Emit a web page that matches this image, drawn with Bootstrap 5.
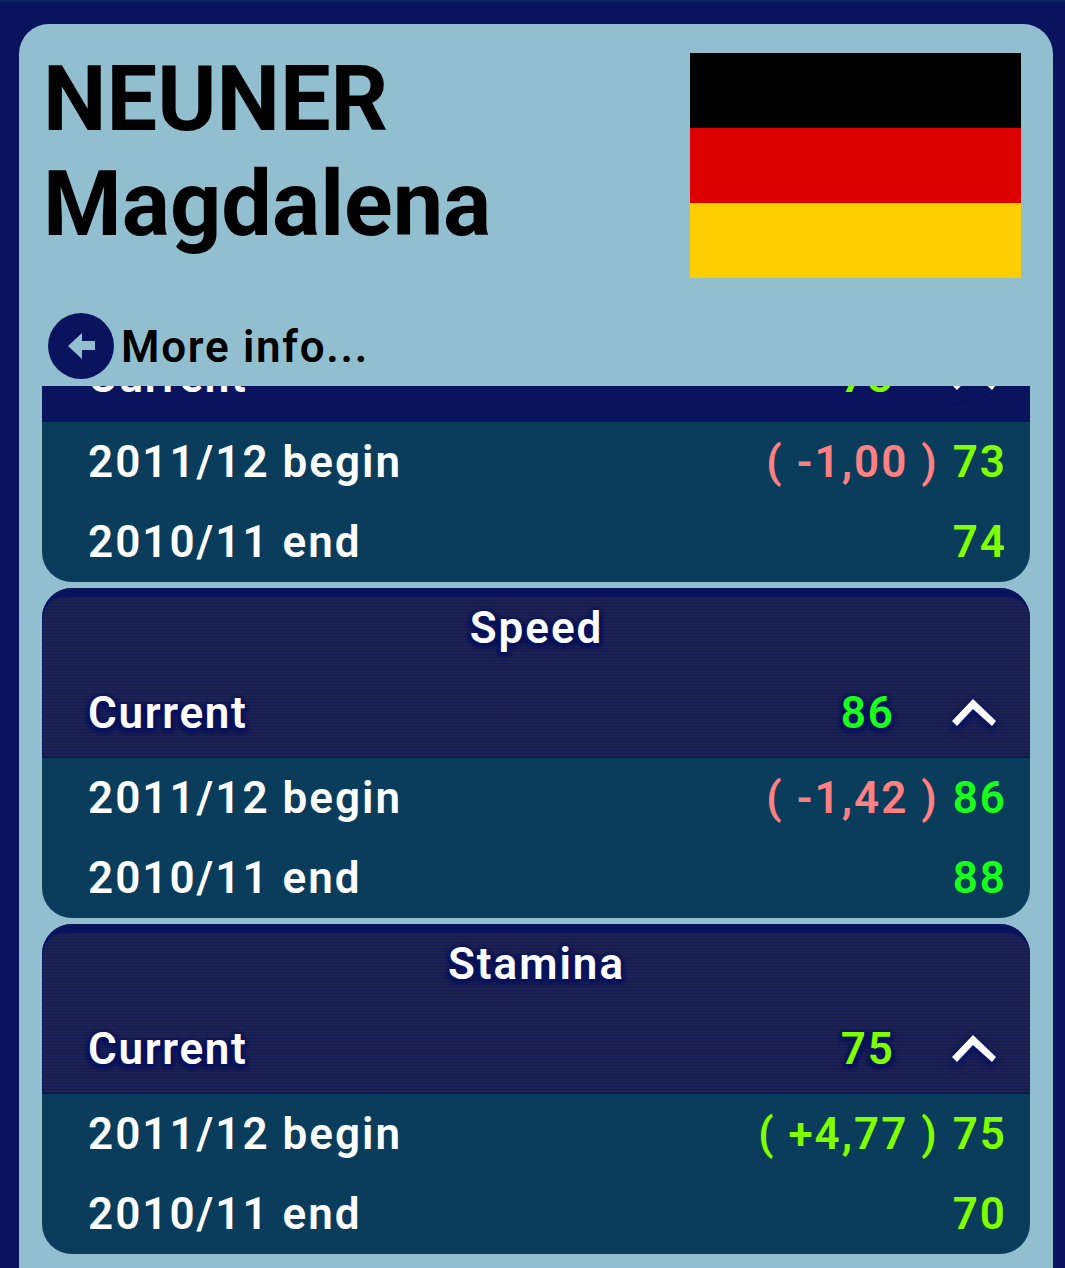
<!DOCTYPE html>
<html lang="en"><head><meta charset="utf-8">
<link href="https://cdn.jsdelivr.net/npm/bootstrap@5.3.0/dist/css/bootstrap.min.css" rel="stylesheet">
<style>
html,body{height:100%;overflow:hidden}
body{background:#0a145e;border-top:2px solid #0a2a5e;padding:22px 12px 0 19px;font-family:Roboto,"Liberation Sans",sans-serif;color:#fff}
.sheet{background:#92bfcf;border-radius:30px 30px 0 0;height:1244px;color:#000;display:flex;flex-direction:column}
.top-area{padding:23px 32px 0 24px}
.athlete{font-size:90px;font-weight:700;line-height:105px;margin:0}
.flag{width:331px;height:225px;margin-top:6px;background:linear-gradient(#000 33.33%,#d00 33.33%,#d00 66.66%,#ffce00 66.66%)}
.more{padding:27px 0 0 29px;height:108px;font-size:44px;font-weight:600;letter-spacing:1.7px}
.more-dot{width:66px;height:66px;border-radius:50%;background:#0a145e;margin-right:7px}
.more-label{padding-top:2px}
.scroller{margin:0 23px;overflow:hidden;flex:1 1 0}
.stack{margin-top:-134px;display:flex;flex-direction:column;gap:6px}
.stat{border-radius:30px;overflow:hidden;background:#0a3d5c;color:#fff;font-size:44px;font-weight:600;letter-spacing:2px}
.stat-head{height:170px;background:#0a145e;padding:9px 0 1px}
.stat-inner{height:160px;border-radius:22px 22px 0 0;background-color:#1d2250;background-image:repeating-linear-gradient(0deg,rgba(10,20,94,.45) 0 1px,transparent 1px 3px);margin-left:1px;position:relative}
.stat-inner.plain{background:#0a145e}
.glow{text-shadow:0 0 3px #0a145e,0 0 4px #0a145e,0 2px 4px #0a145e,0 3px 5px #0a145e,3px 3px 4px #0a145e,-3px 3px 4px #0a145e}
.stat-title{height:60px;text-align:center;line-height:62px}
.cur{height:100px;padding:12px 30px 0 45px}
.cur-label{letter-spacing:1.7px}
.stat-row{height:80px;padding:0 23px 0 46px}
.chev{width:50px;height:32px;margin-left:55px;filter:drop-shadow(0 3px 3px #0a145e) drop-shadow(0 2px 3px #0a145e)}
.g1{color:#80ff00}.g2{color:#1aff1a}.minus{color:#ff8080;margin-right:14px}.plus{color:#80ff00;margin-right:14px}
.body-rows{height:160px}
</style></head>
<body>
<div class="sheet">
  <div class="top-area d-flex justify-content-between align-items-start">
    <h1 class="athlete">NEUNER<br>Magdalena</h1>
    <div class="flag" role="img" aria-label="Germany"></div>
  </div>
  <div class="more d-flex align-items-center">
    <span class="more-dot d-inline-flex align-items-center justify-content-center">
      <svg width="30" height="30" viewBox="0 0 30 30"><path d="M2 15 16 2v8h13v9H16v9z" fill="#92bfcf"/></svg>
    </span>
    <span class="more-label">More info...</span>
  </div>
  <div class="scroller"><div class="stack">

    <section class="stat">
      <div class="stat-head"><div class="stat-inner plain">
        <div class="stat-title">Accuracy</div>
        <div class="cur d-flex align-items-center justify-content-between"><span class="cur-label">Current</span>
          <span class="d-flex align-items-center"><span class="g1">73</span><svg class="chev" viewBox="0 0 50 32"><path d="M2 24 23 2l23 22-4 5-19-17L7 29z" fill="#fff"/></svg></span></div>
      </div></div>
      <div class="body-rows">
        <div class="stat-row d-flex align-items-center justify-content-between"><span>2011/12 begin</span><span><span class="minus">( -1,00 )</span><span class="g1">73</span></span></div>
        <div class="stat-row d-flex align-items-center justify-content-between"><span>2010/11 end</span><span class="g1">74</span></div>
      </div>
    </section>

    <section class="stat">
      <div class="stat-head"><div class="stat-inner">
        <div class="stat-title glow">Speed</div>
        <div class="cur d-flex align-items-center justify-content-between"><span class="glow cur-label">Current</span>
          <span class="d-flex align-items-center"><span class="g2 glow">86</span><svg class="chev" viewBox="0 0 50 32"><path d="M2 24 23 2l23 22-4 5-19-17L7 29z" fill="#fff"/></svg></span></div>
      </div></div>
      <div class="body-rows">
        <div class="stat-row d-flex align-items-center justify-content-between"><span>2011/12 begin</span><span><span class="minus">( -1,42 )</span><span class="g2">86</span></span></div>
        <div class="stat-row d-flex align-items-center justify-content-between"><span>2010/11 end</span><span class="g2">88</span></div>
      </div>
    </section>

    <section class="stat">
      <div class="stat-head"><div class="stat-inner">
        <div class="stat-title glow">Stamina</div>
        <div class="cur d-flex align-items-center justify-content-between"><span class="glow cur-label">Current</span>
          <span class="d-flex align-items-center"><span class="g1 glow">75</span><svg class="chev" viewBox="0 0 50 32"><path d="M2 24 23 2l23 22-4 5-19-17L7 29z" fill="#fff"/></svg></span></div>
      </div></div>
      <div class="body-rows">
        <div class="stat-row d-flex align-items-center justify-content-between"><span>2011/12 begin</span><span><span class="plus">( +4,77 )</span><span class="g1">75</span></span></div>
        <div class="stat-row d-flex align-items-center justify-content-between"><span>2010/11 end</span><span class="g1">70</span></div>
      </div>
    </section>

  </div></div>
</div>
<script src="https://cdn.jsdelivr.net/npm/bootstrap@5.3.0/dist/js/bootstrap.bundle.min.js"></script>
</body></html>
